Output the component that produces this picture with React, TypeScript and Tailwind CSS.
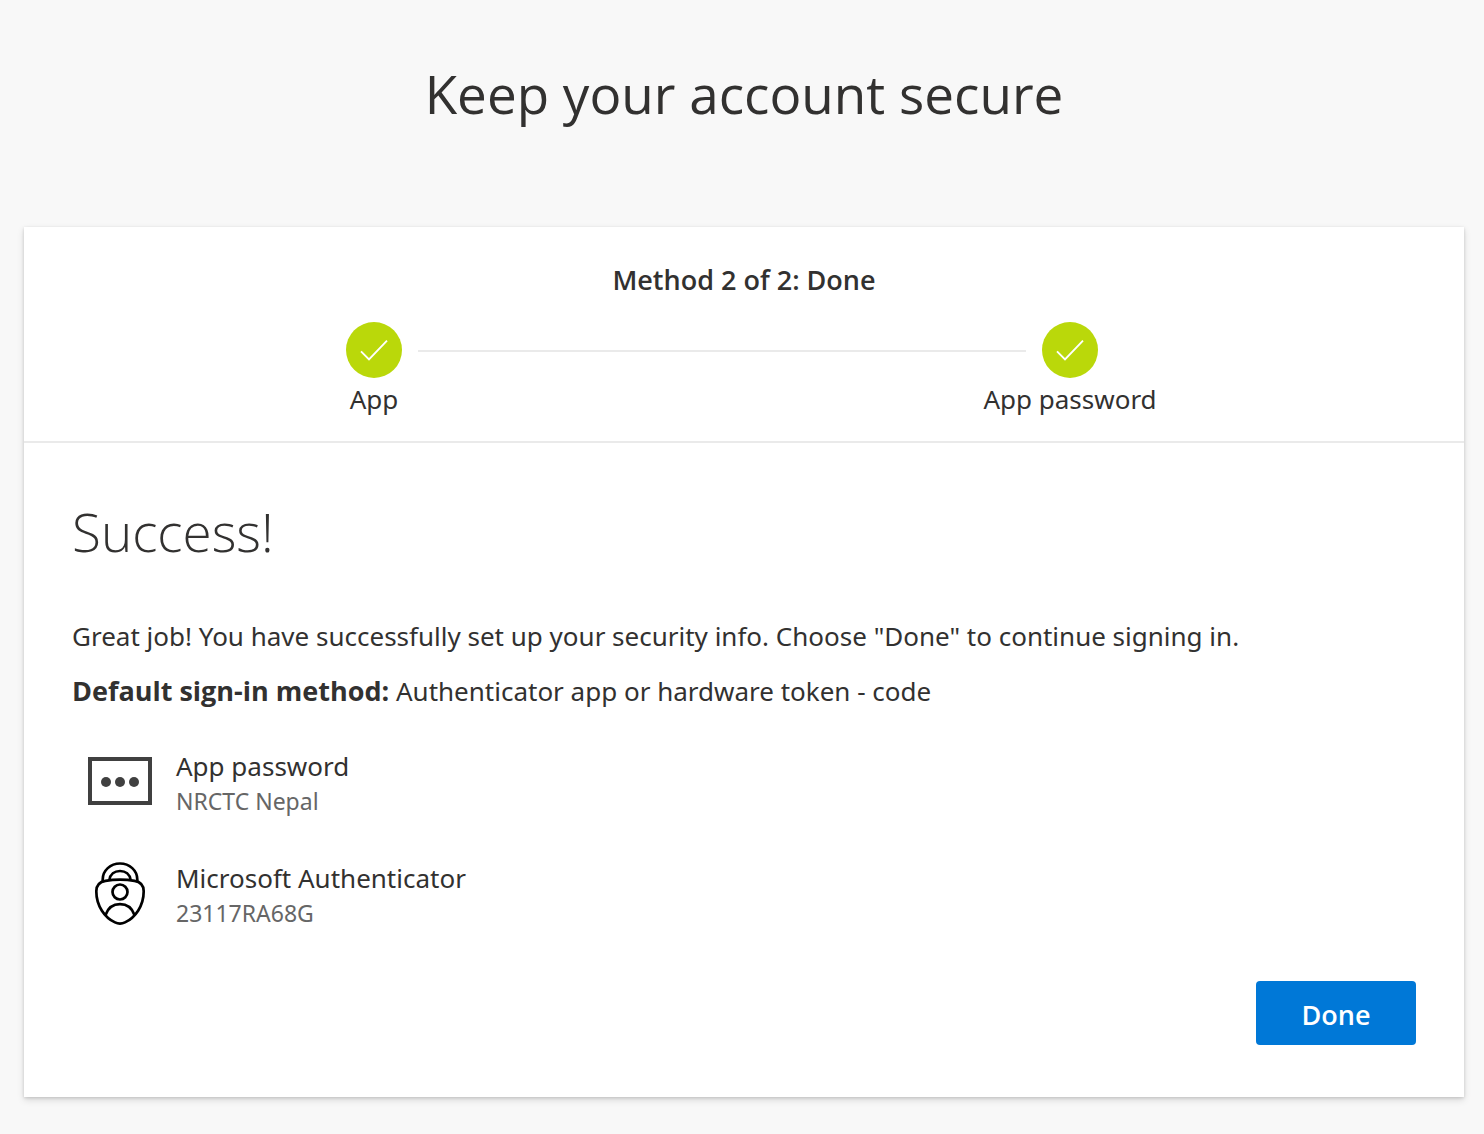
function Check() {
  return (
    <span className="flex size-14 items-center justify-center rounded-full bg-[#bad80a]">
      <svg width="28" height="22" viewBox="0 0 28 22" fill="none" stroke="#fff" strokeWidth="1.9" aria-hidden="true">
        <path d="M1 12.3 9 20.300 27 1.700" />
      </svg>
    </span>
  );
}

function PasswordIcon() {
  return (
    <svg width="64" height="64" viewBox="0 0 64 64" aria-hidden="true">
      <rect x="2" y="10" width="60" height="44" fill="none" stroke="#404040" strokeWidth="4" />
      <g fill="#404040">
        <circle cx="18" cy="33" r="5" />
        <circle cx="32" cy="33" r="5" />
        <circle cx="46" cy="33" r="5" />
      </g>
    </svg>
  );
}

function AuthenticatorIcon() {
  return (
    <svg width="64" height="64" viewBox="0 0 64 64" fill="none" stroke="#000" strokeWidth="2.7" aria-hidden="true">
      <path d="M14.7 20.5V18.5C14.7 9.5 22.4 2.5 32 2.5S49.3 9.5 49.3 18.5V20.5" />
      <path d="M21.4 19C22.2 13.2 26.5 10 32 10S41.8 13.2 42.6 19" />
      <path d="M32 18.7c5 0 9.500.3 14.500 1.100 6.200 1 9.200 4.200 9.200 10.400 0 15-8.700 26.500-18.700 31.200a11.500 11.500 0 0 1-10 0C17 56.700 8.300 45.200 8.300 30.200c0-6.200 3-9.400 9.200-10.400 5-.8 9.500-1.100 14.500-1.100z" />
      <circle cx="32" cy="31" r="7.500" />
      <path d="M17.500 54C20 47 25 43.200 32 43.200S44 47 46.500 54" />
    </svg>
  );
}

const methods = [
  { name: "App password", detail: "NRCTC Nepal", Icon: PasswordIcon },
  { name: "Microsoft Authenticator", detail: "23117RA68G", Icon: AuthenticatorIcon },
];

export default function App() {
  return (
    <main className="min-h-screen bg-[#f8f8f8] pt-[54px] pr-5 pb-9 pl-6 font-['Noto_Sans',sans-serif] text-[#323130]">
      <h1 className="text-center font-['Open_Sans',sans-serif] text-[53px] leading-20">Keep your account secure</h1>
      <div className="mt-[93px] bg-white shadow-[0_3px_7px_rgba(0,0,0,0.13),0_1px_3px_rgba(0,0,0,0.14)]">
        <header className="border-b-2 border-[#eaeaea] pt-[31px] pb-[21px]">
          <h2 className="text-center font-['Open_Sans',sans-serif] text-[27px] leading-11 font-semibold">
            Method 2 of 2: Done
          </h2>
          <ol className="mx-auto mt-5 flex max-w-[828px] items-start">
            <li className="flex w-22 flex-col items-center text-[26px] leading-[42px]">
              <Check />
              App
            </li>
            <li aria-hidden="true" className="-mr-11 mt-7 h-0.5 flex-1 bg-[#eaeaea]" />
            <li className="flex w-44 flex-col items-center text-[26px] leading-[42px] whitespace-nowrap">
              <Check />
              App password
            </li>
          </ol>
        </header>
        <section className="px-12 pt-[49px] pb-13">
          <h2 className="font-['Open_Sans',sans-serif] text-[53px] leading-20 font-light">Success!</h2>
          <p className="mt-[42px] text-[26px] leading-11">
            Great job! You have successfully set up your security info. Choose "Done" to continue signing in.
          </p>
          <p className="mt-[11px] text-[26px] leading-11">
            <strong className="font-['Open_Sans',sans-serif] text-[27px] leading-none font-bold">
              Default sign-in method:
            </strong>{" "}
            Authenticator app or hardware token - code
          </p>
          <ul className="mt-9 flex flex-col gap-12 pl-4">
            {methods.map(({ name, detail, Icon }) => (
              <li key={name} className="flex h-16 items-start gap-6">
                <Icon />
                <div>
                  <p className="text-[26px] leading-[35px]">{name}</p>
                  <p className="text-[23px] leading-[35px] text-[#666]">{detail}</p>
                </div>
              </li>
            ))}
          </ul>
          <div className="mt-14 flex justify-end">
            <button
              type="button"
              className="h-16 w-40 rounded-sm bg-[#0078d7] pt-1 font-['Open_Sans',sans-serif] text-[27px] font-semibold text-white"
            >
              Done
            </button>
          </div>
        </section>
      </div>
    </main>
  );
}
